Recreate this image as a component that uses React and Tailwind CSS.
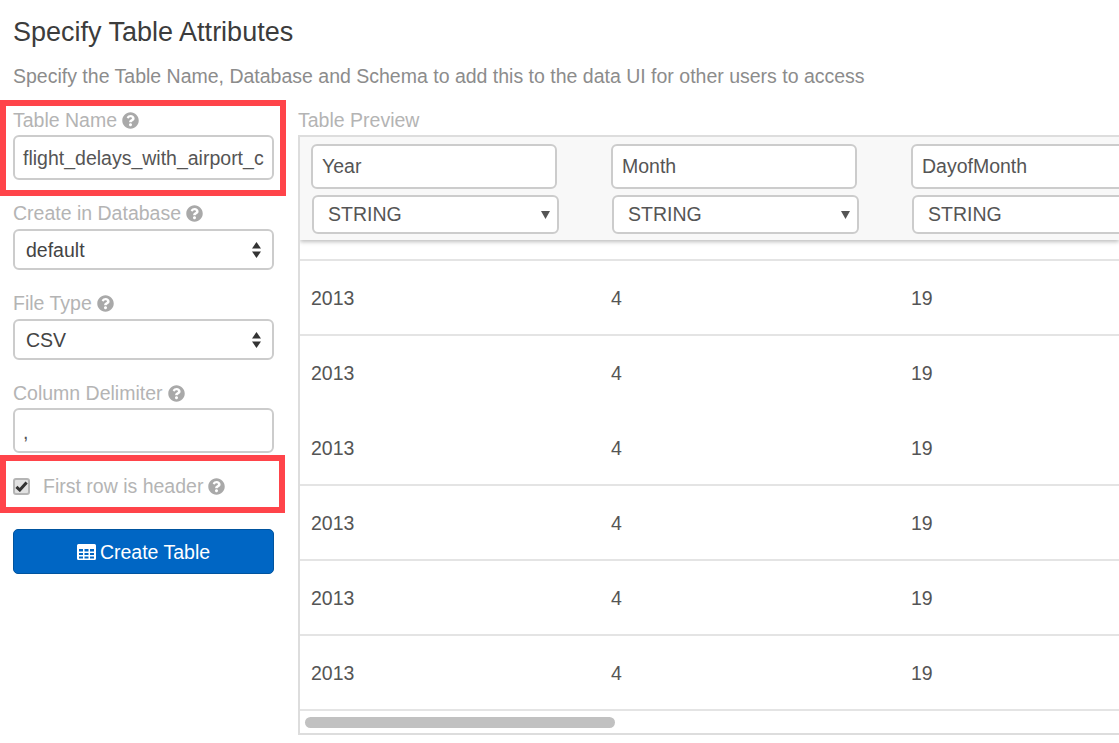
import React from "react";
import { FaQuestionCircle } from "react-icons/fa";

const font = { fontFamily: '"Liberation Sans", Arial, sans-serif' };

const Label = ({ text, className = "" }) => (
  <div className={`flex items-center gap-[5px] h-[26px] text-[19.5px] text-[#b4b4b4] ${className}`}>
    <span className="pt-[2px]">{text}</span>
    <FaQuestionCircle className="w-[17px] h-[17px] text-[#a9a9a9]" />
  </div>
);

const StackedSelect = ({ value }) => (
  <div className="flex items-center justify-between h-[41px] w-[261px] border-2 border-[#cccccc] rounded-[6px] bg-white pl-[11px] pr-[11px] text-[19.5px] text-[#444444]">
    <span className="pt-[2px]">{value}</span>
    <svg width="9" height="16" viewBox="0 0 9 16">
      <path d="M4.5 0 L9 6.5 H0 Z" fill="#333333" />
      <path d="M4.5 16 L9 9.5 H0 Z" fill="#333333" />
    </svg>
  </div>
);

const TextBox = ({ value, className = "" }) => (
  <div className={`flex items-center border-2 border-[#cccccc] rounded-[6px] bg-white text-[19.5px] text-[#555555] overflow-hidden whitespace-nowrap ${className}`}>
    {value}
  </div>
);

const ColumnHeader = ({ name }) => (
  <div className="w-[300px] shrink-0 pl-[11px]">
    <TextBox value={name} className="w-[246px] h-[45px] pl-[9px]" />
    <div className="flex items-center justify-between w-[247px] h-[39px] mt-[6px] ml-[1px] border-2 border-[#cccccc] rounded-[6px] bg-white pl-[14px] pr-[7px] text-[19.5px] text-[#555555]">
      <span>STRING</span>
      <svg width="9" height="9" viewBox="0 0 9 9">
        <path d="M0 1 H9 L4.5 9 Z" fill="#555555" />
      </svg>
    </div>
  </div>
);

const Row = ({ line = true }) => (
  <div className={`flex items-center h-[75px] pt-[2px] text-[19.5px] text-[#555555] border-b-2 ${line ? "border-[#e4e4e4]" : "border-transparent"}`}>
    <div className="w-[300px] shrink-0 pl-[11px]">2013</div>
    <div className="w-[300px] shrink-0 pl-[11px]">4</div>
    <div className="w-[300px] shrink-0 pl-[11px]">19</div>
  </div>
);

export default function App() {
  return (
    <div className="relative w-[1119px] h-[743px] overflow-hidden bg-white" style={font}>
      <div className="pl-[13px] pt-[15px]">
        <h1 className="h-[34px] leading-[34px] text-[27px] text-[#3c3c3c]">Specify Table Attributes</h1>
        <p className="mt-[13px] h-[28px] leading-[28px] text-[19.5px] text-[#8c8c8c] whitespace-nowrap">
          Specify the Table Name, Database and Schema to add this to the data UI for other users to access
        </p>

        <div className="flex gap-[24px] mt-[17px]">
          <div className="w-[261px] shrink-0">
            <Label text="Table Name" />
            <TextBox value="flight_delays_with_airport_c" className="w-[261px] h-[45px] mt-[2px] pl-[8px] pt-[2px]" />
            <Label text="Create in Database" className="mt-[20px]" />
            <div className="mt-[3px]"><StackedSelect value="default" /></div>
            <Label text="File Type" className="mt-[20px]" />
            <div className="mt-[3px]"><StackedSelect value="CSV" /></div>
            <Label text="Column Delimiter" className="mt-[20px]" />
            <TextBox value="," className="w-[261px] h-[45px] mt-[2px] pl-[8px] pt-[4px]" />
            <div className="flex items-center h-[26px] mt-[20px]">
              <span className="flex items-center justify-center w-[17px] h-[17px] rounded-[3px] border-2 border-[#b5b5b5] bg-[#e2e2e2]">
                <svg width="13" height="11" viewBox="0 0 13 11">
                  <path d="M1.4 5.8 L4.8 9 L11.6 1.4" fill="none" stroke="#333333" strokeWidth="3" />
                </svg>
              </span>
              <Label text="First row is header" className="ml-[13px]" />
            </div>
            <button className="flex items-center justify-center gap-[4px] w-[261px] h-[45px] mt-[30px] rounded-[5px] bg-[#0066c4] border border-[#00549f] text-white text-[19.5px]">
              <svg width="19" height="16" viewBox="0 0 19 16">
                <path
                  fillRule="evenodd"
                  fill="#ffffff"
                  d="M1.5 0 H17.5 A1.5 1.5 0 0 1 19 1.5 V14.5 A1.5 1.5 0 0 1 17.5 16 H1.5 A1.5 1.5 0 0 1 0 14.5 V1.5 A1.5 1.5 0 0 1 1.5 0 Z M2 5 V7.5 H6 V5 Z M7.5 5 V7.5 H11.5 V5 Z M13 5 V7.5 H17 V5 Z M2 9 V11 H6 V9 Z M7.5 9 V11 H11.5 V9 Z M13 9 V11 H17 V9 Z M2 12.5 V14.5 H6 V12.5 Z M7.5 12.5 V14.5 H11.5 V12.5 Z M13 12.5 V14.5 H17 V12.5 Z"
                />
              </svg>
              <span className="pt-[2px]">Create Table</span>
            </button>
          </div>

          <div className="flex-1 min-w-0">
            <div className="h-[26px] leading-[26px] text-[19.5px] text-[#b4b4b4]">Table Preview</div>
            <div className="w-[821px] h-[600px] mt-[2px] border-l-2 border-t-2 border-b-2 border-[#dddddd] overflow-hidden">
              <div className="relative flex h-[103px] pt-[7px] bg-[#f8f8f8] shadow-[0_2px_4px_rgba(0,0,0,0.25)]">
                <ColumnHeader name="Year" />
                <ColumnHeader name="Month" />
                <ColumnHeader name="DayofMonth" />
              </div>
              <div className="h-[21px] border-b-2 border-[#e4e4e4]" />
              <Row />
              <Row line={false} />
              <Row />
              <Row />
              <Row />
              <Row />
              <div className="pt-[6px] pl-[5px]">
                <div className="w-[310px] h-[11px] rounded-full bg-[#c1c1c1]" />
              </div>
            </div>
          </div>
        </div>
      </div>

      {/* red callouts */}
      <div className="absolute left-0 top-[100px] w-[286px] h-[96px] border-[6px] border-[#ff444a]" />
      <div className="absolute left-0 top-[455px] w-[285px] h-[58px] border-[6px] border-[#ff444a]" />
    </div>
  );
}
